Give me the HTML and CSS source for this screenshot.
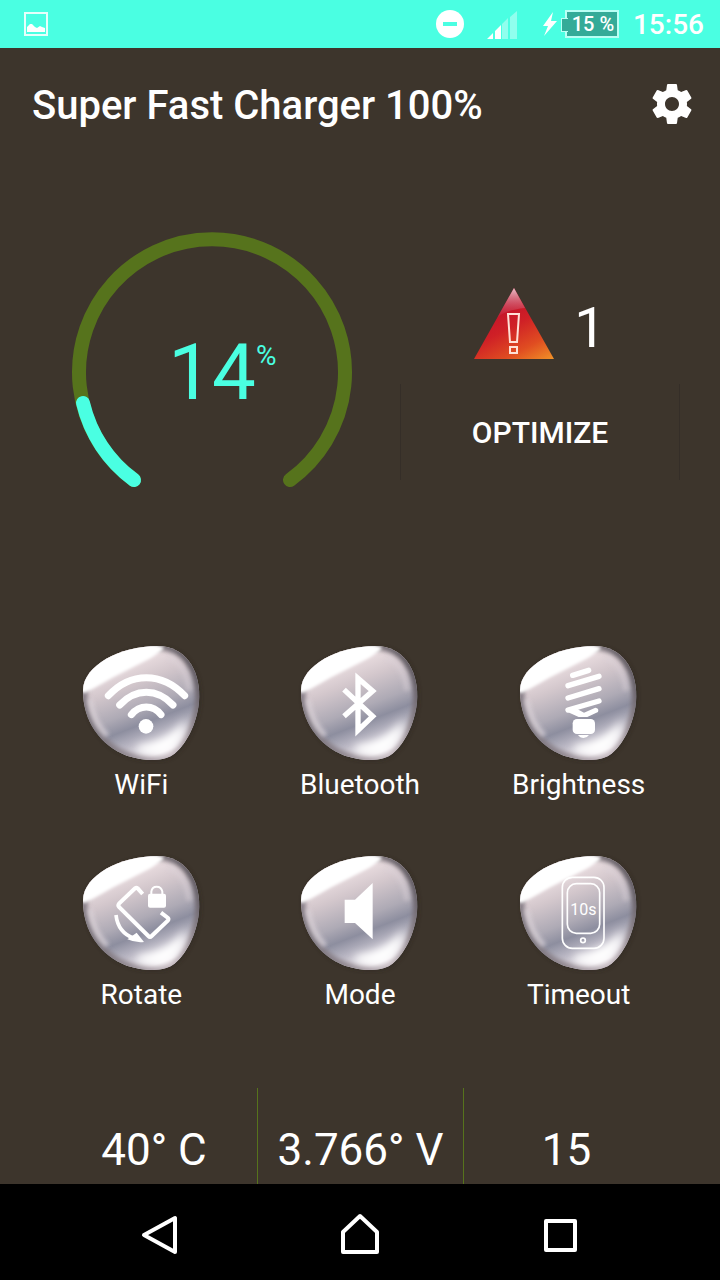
FILE: index.html
```html
<!DOCTYPE html>
<html lang="en">
<head>
<meta charset="utf-8">
<meta name="viewport" content="width=device-width, initial-scale=1">
<title>Super Fast Charger 100%</title>
<link rel="stylesheet" href="styles.css">
</head>
<body>
<svg class="defs" width="0" height="0" aria-hidden="true">
  <defs>
    <linearGradient id="gem-body" gradientUnits="userSpaceOnUse" x1="130" y1="80" x2="255" y2="400">
      <stop offset="0" stop-color="#f3e6e8"/>
      <stop offset=".25" stop-color="#d3c7cc"/>
      <stop offset=".48" stop-color="#aeaab5"/>
      <stop offset=".61" stop-color="#8d8e9f"/>
      <stop offset=".76" stop-color="#bfbcc8"/>
      <stop offset=".9" stop-color="#f6f1f6"/>
      <stop offset="1" stop-color="#bdb0b9"/>
    </linearGradient>
    <linearGradient id="gem-rim" gradientUnits="userSpaceOnUse" x1="60" y1="300" x2="390" y2="120">
      <stop offset="0" stop-color="#777078"/>
      <stop offset=".5" stop-color="#c3b7be"/>
      <stop offset="1" stop-color="#5f5960"/>
    </linearGradient>
    <linearGradient id="alert-fill" x1=".3" y1=".1" x2=".9" y2="1.1">
      <stop offset="0" stop-color="#bd0c2c"/>
      <stop offset=".4" stop-color="#cf2026"/>
      <stop offset=".7" stop-color="#e04d21"/>
      <stop offset="1" stop-color="#f39a28"/>
    </linearGradient>
    <linearGradient id="alert-shine" x1="0" y1="0" x2="0" y2="1">
      <stop offset="0" stop-color="#e8c3cb"/>
      <stop offset="1" stop-color="#c8304c" stop-opacity=".2"/>
    </linearGradient>
    <filter id="soft" x="-30%" y="-30%" width="160%" height="160%"><feGaussianBlur stdDeviation="7"/></filter>
    <filter id="soft-edge" x="-30%" y="-30%" width="160%" height="160%"><feGaussianBlur stdDeviation="4"/></filter>
    <filter id="soft-wide" x="-50%" y="-50%" width="200%" height="200%"><feGaussianBlur stdDeviation="12"/></filter>
    <clipPath id="gem-clip"><path d="M42 168C43 95 153 36 265 36C348 36 392 105 391 190C388 260 356 325 318 358C290 382 235 384 173 365C93 335 41 260 42 168Z"/></clipPath>
    <symbol id="gem" viewBox="0 0 435 390">
      <path d="M42 168C43 95 153 36 265 36C348 36 392 105 391 190C388 260 356 325 318 358C290 382 235 384 173 365C93 335 41 260 42 168Z" fill="#25201c" opacity=".45" filter="url(#soft)" transform="translate(4 3)"/>
      <g clip-path="url(#gem-clip)">
        <path d="M0 0H435V390H0Z" fill="url(#gem-body)"/>
        <path d="M42 168C43 95 153 36 265 36C348 36 392 105 391 190C388 260 356 325 318 358C290 382 235 384 173 365C93 335 41 260 42 168Z" fill="none" stroke="url(#gem-rim)" stroke-width="26" filter="url(#soft)"/>
        <path d="M205 335Q295 325 350 255L342 300Q320 345 285 360Q245 366 205 352Z" fill="#fff" filter="url(#soft-wide)"/>
        <path d="M300 70Q352 95 360 170" fill="none" stroke="#dcd1d8" stroke-width="16" opacity=".5" filter="url(#soft)"/>
        <path d="M62 195Q72 265 115 305" fill="none" stroke="#ded6dc" stroke-width="16" opacity=".7" filter="url(#soft)"/>
        <path d="M44 178Q70 166 130 131L240 75Q284 50 284 40L180 10L20 60L20 160Z" fill="#fff" filter="url(#soft-edge)"/>
      </g>
    </symbol>
  </defs>
</svg>

<div class="screen">
  <div class="status">
    <svg class="status-picture" width="24" height="24" viewBox="0 0 24 24" role="img" aria-label="Picture saved">
      <rect x="1" y="1" width="22" height="22" fill="none" stroke="#e6fffb" stroke-width="2"/>
      <path d="M3 20V15L6 12L8 12L11 15L13 16L16 14L18 15L21 16V20Z" fill="#fff"/>
    </svg>
    <svg width="30" height="30" viewBox="0 0 30 30" role="img" aria-label="Do not disturb">
      <circle cx="15" cy="15" r="14" fill="#fff"/><rect x="8" y="13" width="14" height="4" fill="#4affe2"/>
    </svg>
    <svg class="status-signal" width="30" height="30" viewBox="0 0 30 30" role="img" aria-label="Signal">
      <path d="M0 30L6 24V30ZM8 22L14 16V30H8Z" fill="#fff"/>
      <path d="M15 15L21 9V30H15ZM23 8L30 2V30H23Z" fill="#90ffee"/>
    </svg>
    <div class="power">
      <svg width="18" height="26" viewBox="0 0 18 26" aria-hidden="true"><path d="M12 1L2 15H7L3 25L16 10H10Z" fill="#fff"/></svg>
      <span class="battery">15 %</span>
    </div>
    <time class="clock">15:56</time>
  </div>

  <header class="bar">
    <h1>Super Fast Charger 100%</h1>
    <button class="plain" type="button" aria-label="Settings">
      <svg width="48" height="48" viewBox="0 0 24 24"><path fill="#fff" d="M19.43 12.98c.04-.32.07-.64.07-.98s-.03-.66-.07-.98l2.11-1.65c.19-.15.24-.42.12-.64l-2-3.46c-.12-.22-.39-.3-.61-.22l-2.49 1c-.52-.4-1.08-.73-1.69-.98l-.38-2.65C14.46 2.18 14.25 2 14 2h-4c-.25 0-.46.18-.49.42l-.38 2.65c-.61.25-1.17.59-1.69.98l-2.49-1c-.23-.09-.49 0-.61.22l-2 3.46c-.13.22-.07.49.12.64l2.11 1.65c-.04.32-.07.65-.07.98s.03.66.07.98l-2.11 1.65c-.19.15-.24.42-.12.64l2 3.46c.12.22.39.3.61.22l2.49-1c.52.4 1.08.73 1.69.98l.38 2.65c.03.24.24.42.49.42h4c.25 0 .46-.18.49-.42l.38-2.65c.61-.25 1.17-.59 1.69-.98l2.49 1c.23.09.49 0 .61-.22l2-3.46c.12-.22.07-.49-.12-.64l-2.11-1.65zM12 15.5c-1.93 0-3.5-1.57-3.5-3.5s1.57-3.5 3.5-3.5 3.5 1.57 3.5 3.5-1.57 3.5-3.5 3.5z"/></svg>
    </button>
  </header>

  <main>
    <section class="hero">
      <svg class="gauge" viewBox="0 0 280 256" role="img" aria-label="Battery level 14%">
        <path d="M62 248A133 133 0 1 1 218 248" fill="none" stroke="#56731c" stroke-width="14" stroke-linecap="round"/>
        <path d="M62 248A133 133 0 0 1 11 171" fill="none" stroke="#4affe2" stroke-width="14" stroke-linecap="round"/>
        <text class="gauge-value" x="140" y="167" text-anchor="middle">14</text>
        <text class="gauge-unit" x="184" y="133">%</text>
      </svg>
      <div class="issues">
        <div class="alert">
          <svg width="80" height="72" viewBox="0 0 80 72" role="img" aria-label="Warning">
            <path d="M40 0L80 71H0Z" fill="url(#alert-fill)"/>
            <path d="M40 0L51 20Q31 22 23 30Z" fill="url(#alert-shine)"/>
            <path d="M34 26H45L43 54H36ZM36 59H43V65H36Z" fill="none" stroke="#ffe0d6" stroke-width="2"/>
          </svg>
          <span class="count">1</span>
        </div>
        <button class="optimize" type="button">OPTIMIZE</button>
      </div>
    </section>

    <section class="tiles">
      <button class="tile" type="button">
        <svg viewBox="0 0 435 390" aria-hidden="true"><use href="#gem"/>
          <g transform="translate(3 0)" fill="none" stroke="#fff" stroke-width="21" stroke-linecap="round">
            <path d="M115 185Q165 131 229 131Q293 131 344 185M149 213Q185 175 229 175Q273 175 309 213M184 242Q203 219 229 219Q255 219 273 242"/>
            <circle cx="228" cy="277" r="22" fill="#fff" stroke="none"/>
          </g></svg>
        <span>WiFi</span>
      </button>
      <button class="tile" type="button">
        <svg viewBox="0 0 435 390" aria-hidden="true"><use href="#gem"/>
          <path transform="translate(8 0)" d="M163 167L249 247L205 289V133L249 171L163 247" fill="none" stroke="#fff" stroke-width="16"/></svg>
        <span>Bluetooth</span>
      </button>
      <button class="tile" type="button">
        <svg viewBox="0 0 435 390" aria-hidden="true"><use href="#gem"/>
          <g transform="translate(-4 0)" fill="none" stroke="#fff" stroke-width="16" stroke-linecap="round" stroke-linejoin="round">
            <path d="M204 124L252 109M190 155L283 127M190 192L283 164M190 228L283 201"/>
            <path d="M184 232L212 222L238 236L272 221Q284 222 280 234L248 249H222Z" fill="#fff" stroke="none"/>
            <rect x="204" y="255" width="67" height="45" rx="13" fill="#fff" stroke="none"/>
            <path d="M220 303H253Q247 312 237 312Q226 312 220 303Z" fill="#fff" stroke="none"/>
          </g></svg>
        <span>Brightness</span>
      </button>
      <button class="tile" type="button">
        <svg viewBox="0 0 435 390" aria-hidden="true"><use href="#gem"/>
          <g transform="translate(3 0)" fill="none" stroke="#fff" stroke-width="12">
            <path d="M218 150L203 133Q199 130 195 133L147 179Q143 184 147 189L235 276Q240 281 245 276L294 229Q297 225 293 221L273 206"/>
            <path d="M138 213Q144 266 192 283" stroke-width="11"/>
            <path d="M200 266L222 294Q196 297 172 286Z" fill="#fff" stroke="none"/>
            <path d="M244 150V143Q246 128 260 128Q274 128 277 143V150" stroke-width="6"/>
            <rect x="234" y="149" width="54" height="42" rx="6" fill="#fff" stroke="none"/>
          </g></svg>
        <span>Rotate</span>
      </button>
      <button class="tile" type="button">
        <svg viewBox="0 0 435 390" aria-hidden="true"><use href="#gem"/>
          <path transform="translate(8 0)" d="M165 167H196L249 117V286L196 237H165Z" fill="#fff"/></svg>
        <span>Mode</span>
      </button>
      <button class="tile" type="button">
        <svg viewBox="0 0 435 390" aria-hidden="true"><use href="#gem"/>
          <g transform="translate(-4 0)" fill="none" stroke="#fff" stroke-width="5">
            <rect x="173" y="100" width="125" height="213" rx="30"/>
            <rect x="188" y="119" width="97" height="149" rx="27"/>
            <circle cx="235" cy="289" r="7"/>
            <text class="timeout-value" x="236" y="213" text-anchor="middle">10s</text>
          </g></svg>
        <span>Timeout</span>
      </button>
    </section>

    <section class="stats">
      <div>40° C</div>
      <div>3.766° V</div>
      <div>15</div>
    </section>
  </main>

  <nav class="nav">
    <button class="plain" type="button" aria-label="Back"><svg width="48" height="48" viewBox="0 0 48 48"><path d="M8 25L39 8V42Z"/></svg></button>
    <button class="plain" type="button" aria-label="Home"><svg width="48" height="48" viewBox="0 0 48 48"><path d="M7 22L24 6L41 22V42H7Z"/></svg></button>
    <button class="plain" type="button" aria-label="Recent apps"><svg width="48" height="48" viewBox="0 0 48 48"><rect x="10" y="11" width="29" height="29"/></svg></button>
  </nav>
</div>
</body>
</html>
```
FILE: styles.css
```css
* {
  box-sizing: border-box;
}

body {
  margin: 0;
  background: #3d352c;
  color: #fff;
  font-family: Roboto, "Noto Sans", sans-serif;
}

button {
  padding: 0;
  border: 0;
  background: none;
  color: inherit;
  font: inherit;
  cursor: pointer;
}

svg {
  display: block;
}

.defs {
  position: absolute;
}

.screen {
  display: flex;
  flex-direction: column;
  min-height: 100vh;
}

.plain {
  display: grid;
  place-items: center;
}

.status {
  display: flex;
  align-items: center;
  height: 48px;
  padding: 0 16px 0 24px;
  background: #4affe2;
}

.status-picture {
  margin-right: auto;
}

.status-signal {
  margin: 0 24px 0 22px;
}

.power {
  display: flex;
  align-items: center;
  gap: 6px;
}

.battery {
  position: relative;
  width: 54px;
  padding-left: 2px;
  border: 2px solid #b9fff4;
  background: #34ab98;
  font-size: 20px;
  font-weight: 500;
  line-height: 24px;
  text-align: center;
}

.battery::before {
  content: "";
  position: absolute;
  top: 6px;
  left: -6px;
  width: 6px;
  height: 12px;
  border: 1px solid #b9fff4;
  border-right: 0;
  background: #34ab98;
}

.clock {
  margin-left: 14px;
  font-size: 28px;
  font-weight: 500;
}

.bar {
  display: flex;
  align-items: center;
  justify-content: space-between;
  height: 112px;
  padding: 0 24px 0 32px;
}

.bar h1 {
  margin: 0;
  padding-top: 4px;
  font-size: 40px;
  font-weight: 500;
  line-height: 48px;
}

main {
  display: flex;
  flex: 1;
  flex-direction: column;
}

.hero {
  display: grid;
  flex: 1;
  grid-template-columns: 1fr 1fr;
  align-items: start;
  gap: 48px;
  padding: 72px 40px 0 72px;
}

.gauge {
  width: 100%;
  overflow: visible;
  fill: #4affe2;
}

.gauge-value {
  font-size: 78px;
}

.gauge-unit {
  font-size: 28px;
}

.issues {
  display: grid;
  gap: 24px;
  padding-top: 56px;
}

.alert {
  display: flex;
  align-items: flex-end;
  justify-content: center;
  gap: 20px;
}

.count {
  font-size: 56px;
  line-height: 64px;
}

.optimize {
  height: 96px;
  border: 1px solid #352e28;
  border-width: 0 1px;
  font-size: 30px;
  font-weight: 500;
}

.tiles {
  display: grid;
  grid-template-columns: repeat(3, 1fr);
  row-gap: 43px;
  padding: 0 32px 77px;
}

.tile {
  display: grid;
  justify-items: center;
  gap: 5px;
  font-size: 28px;
  line-height: 32px;
}

.tile svg {
  width: 145px;
  height: 130px;
}

.timeout-value {
  fill: #fff;
  stroke: none;
  font-family: "Liberation Sans Narrow", Roboto, sans-serif;
  font-size: 48px;
}

.stats {
  display: grid;
  grid-template-columns: repeat(3, 1fr);
  height: 96px;
  padding: 0 51px;
  font-size: 44px;
  line-height: 52px;
  text-align: center;
}

.stats div {
  padding-top: 36px;
}

.stats div + div {
  border-left: 1px solid #56731c;
}

.nav {
  display: grid;
  grid-template-columns: repeat(3, 1fr);
  height: 96px;
  padding: 4px 60px 0;
  background: #000;
}

.nav svg {
  fill: none;
  stroke: #fff;
  stroke-width: 4;
  stroke-linejoin: round;
}
```
